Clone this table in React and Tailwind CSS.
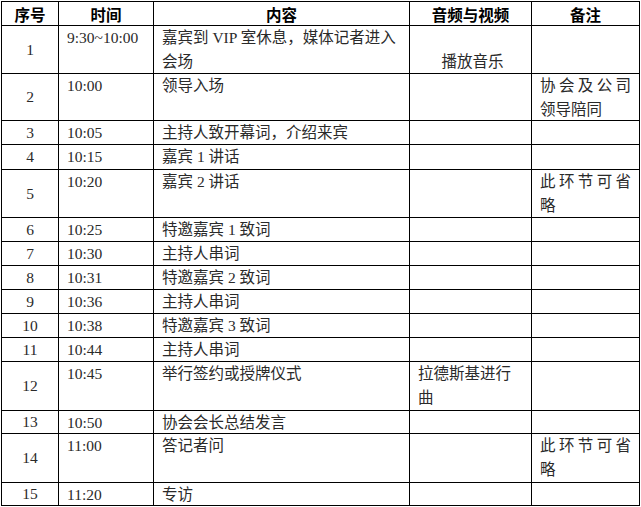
const ROWS = [
  { n: 1, h: "h-[48px]", time: "9:30~10:00", content: ["嘉宾到 VIP 室休息，媒体记者进入", "会场"], audioLow: "播放音乐" },
  { n: 2, h: "h-[47px]", time: "10:00", content: ["领导入场"], note: ["协会及公司", "领导陪同"] },
  { n: 3, h: "h-[24px]", time: "10:05", content: ["主持人致开幕词，介绍来宾"] },
  { n: 4, h: "h-[25px]", time: "10:15", content: ["嘉宾 1 讲话"] },
  { n: 5, h: "h-[48px]", time: "10:20", content: ["嘉宾 2 讲话"], note: ["此环节可省", "略"] },
  { n: 6, h: "h-[24px]", time: "10:25", content: ["特邀嘉宾 1 致词"] },
  { n: 7, h: "h-[24px]", time: "10:30", content: ["主持人串词"] },
  { n: 8, h: "h-[24px]", time: "10:31", content: ["特邀嘉宾 2 致词"] },
  { n: 9, h: "h-[24px]", time: "10:36", content: ["主持人串词"] },
  { n: 10, h: "h-[24px]", time: "10:38", content: ["特邀嘉宾 3 致词"] },
  { n: 11, h: "h-[24px]", time: "10:44", content: ["主持人串词"] },
  { n: 12, h: "h-[49px]", time: "10:45", content: ["举行签约或授牌仪式"], audio: ["拉德斯基进行", "曲"] },
  { n: 13, h: "h-[23px]", time: "10:50", content: ["协会会长总结发言"] },
  { n: 14, h: "h-[49px]", time: "11:00", content: ["答记者问"], note: ["此环节可省", "略"] },
  { n: 15, h: "h-[23px]", time: "11:20", content: ["专访"] },
];

const cell = "border-r border-b border-black shrink-0";

function Lines({ lines, spread }) {
  if (!lines) return null;
  return lines.map((l, i) => (
    <div key={i} className={i === 0 && spread && lines.length > 1 ? "tracking-[3.4px] whitespace-nowrap" : "whitespace-nowrap"}>
      {l}
    </div>
  ));
}

export default function App() {
  return (
    <div
      className="bg-white w-[641px] h-[507px] pl-px pt-px text-[15.5px] leading-[24px] text-[#2a2a2a]"
      style={{ fontFamily: '"Liberation Serif", "Noto Sans CJK SC", serif' }}
    >
      <div className="w-[639px] border-l border-t border-black">
        {/* header */}
        <div
          className="flex h-[24px] font-bold text-black"
          style={{ fontFamily: '"Noto Sans CJK SC", "Liberation Sans", sans-serif' }}
        >
          <div className={`${cell} w-[57px] flex items-center justify-center`}>序号</div>
          <div className={`${cell} w-[95px] flex items-center justify-center`}>时间</div>
          <div className={`${cell} w-[256px] flex items-center justify-center`}>内容</div>
          <div className={`${cell} w-[122px] flex items-center justify-center`}>音频与视频</div>
          <div className={`${cell} w-[108px] flex items-center justify-center`}>备注</div>
        </div>

        {ROWS.map((r) => (
          <div key={r.n} className={`flex ${r.h}`}>
            <div className={`${cell} w-[57px] flex items-center justify-center`}>{r.n}</div>
            <div className={`${cell} w-[95px] pl-2`}>{r.time}</div>
            <div className={`${cell} w-[256px] pl-2`}>
              <Lines lines={r.content} />
            </div>
            <div className={`${cell} w-[122px] pl-2`}>
              {r.audioLow && <div className="pt-[24px] text-center pr-1">{r.audioLow}</div>}
              <Lines lines={r.audio} />
            </div>
            <div className={`${cell} w-[108px] pl-2`}>
              <Lines lines={r.note} spread />
            </div>
          </div>
        ))}
      </div>
    </div>
  );
}
